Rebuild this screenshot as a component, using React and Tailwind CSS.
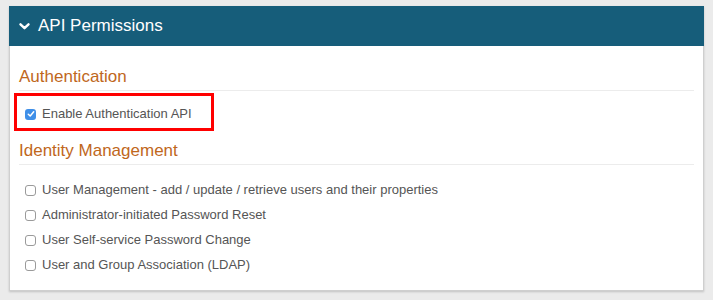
import React from "react";

function Box({ checked }) {
  if (checked) {
    return (
      <span className="flex h-[11px] w-[11px] shrink-0 items-center justify-center rounded-[3px] bg-[#3f8fe8]">
        <svg width="8" height="8" viewBox="0 0 8 8">
          <path d="M1.3 4.2 L3.2 6 L6.7 1.8" fill="none" stroke="#fff" strokeWidth="1.5" strokeLinecap="round" strokeLinejoin="round" />
        </svg>
      </span>
    );
  }
  return <span className="block h-[11px] w-[11px] shrink-0 rounded-[3px] border border-[#9a9a9a] bg-white" />;
}

function Row({ label, checked }) {
  return (
    <div className="flex h-4 items-center gap-[6px] pl-[6px] text-[13px] leading-4 text-[#555]">
      <Box checked={checked} />
      <span>{label}</span>
    </div>
  );
}

export default function App() {
  return (
    <div className="h-[300px] bg-[#ebebeb] px-[9px] pt-[6px]" style={{ fontFamily: '"Liberation Sans", Arial, sans-serif' }}>
      <div className="shadow-[0_1px_2px_rgba(0,0,0,0.18)]">
        <div className="flex h-10 items-center bg-[#165d7a] pl-[10px] text-white">
          <svg width="11" height="7" viewBox="0 0 11 7" className="mt-[1px]">
            <path d="M1.5 1.3 L5.5 5.2 L9.5 1.3" fill="none" stroke="#fff" strokeWidth="2.4" strokeLinecap="round" strokeLinejoin="round" />
          </svg>
          <span className="ml-[8px] text-[17px] leading-5">API Permissions</span>
        </div>
        <div className="border border-t-0 border-[#cfcfcf] bg-white px-[9px] pt-[21px] pb-[17px]">
          <div className="text-[17px] leading-5 text-[#c0671c]">Authentication</div>
          <div className="mt-[3px] h-px bg-[#ececec]" />
          <div className="-ml-[5px] mt-[2px] w-[200px] border-[3px] border-[#ff0000] pt-[10px] pb-[6px] pl-[2px]">
            <Row label="Enable Authentication API" checked />
          </div>
          <div className="mt-[10px] text-[17px] leading-5 text-[#c0671c]">Identity Management</div>
          <div className="mt-[3px] h-px bg-[#ececec]" />
          <div className="mt-[17px] flex flex-col gap-[9px]">
            <Row label="User Management - add / update / retrieve users and their properties" />
            <Row label="Administrator-initiated Password Reset" />
            <Row label="User Self-service Password Change" />
            <Row label="User and Group Association (LDAP)" />
          </div>
        </div>
      </div>
    </div>
  );
}
